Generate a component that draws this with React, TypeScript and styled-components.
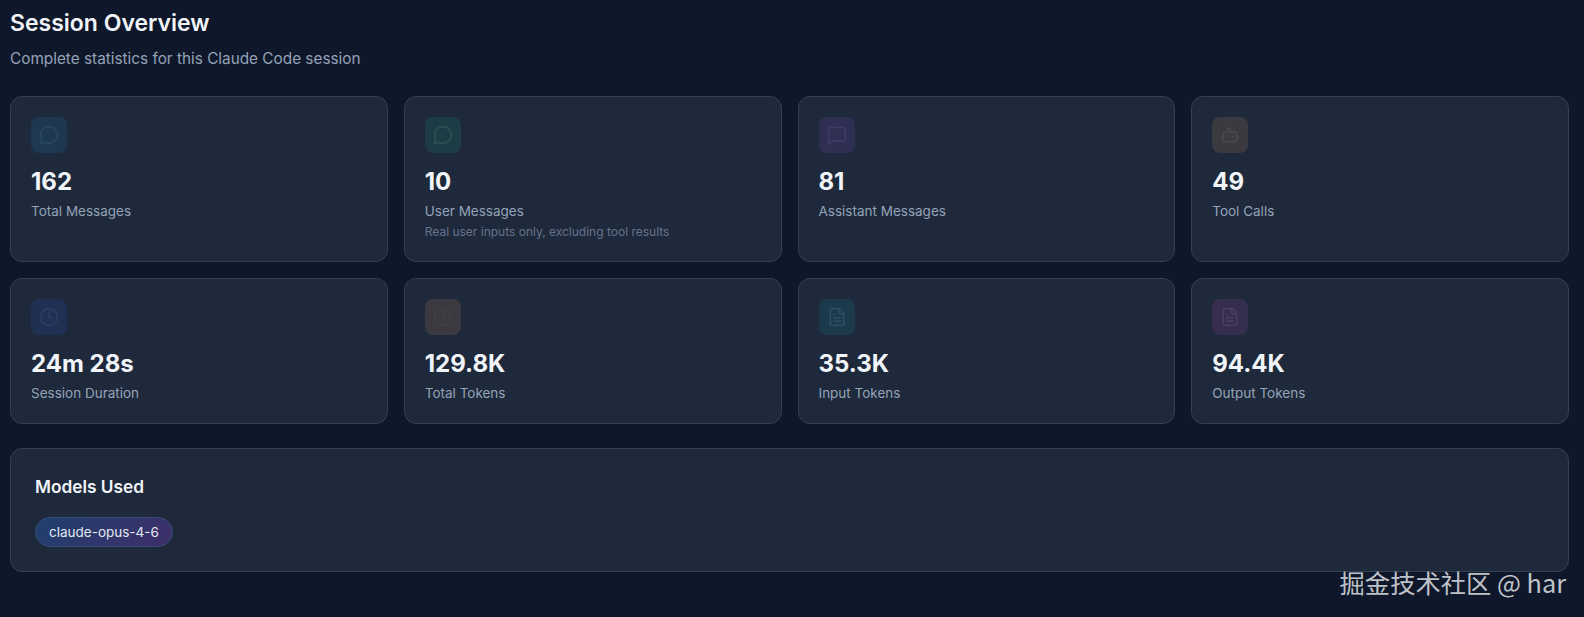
import React from 'react';
import styled, { createGlobalStyle } from 'styled-components';
import { MessageCircle, MessageSquare, Bot, Clock, PieChart, FileText } from 'lucide-react';

const Global = createGlobalStyle`
  html, body { margin: 0; padding: 0; background: #0f172a; }
  body { font-family: Inter, "Noto Sans", sans-serif; overflow: hidden; }
`;

const Page = styled.div`
  position: relative;
  height: 617px;
  box-sizing: border-box;
  padding: 10px 15px 0 10px;
  overflow: hidden;
`;

const Title = styled.h1`
  margin: 0;
  font-size: 23px;
  line-height: 26px;
  font-weight: 600;
  color: #f1f5f9;
`;

const Subtitle = styled.p`
  margin: 12px 0 0;
  font-size: 15.33px;
  line-height: 22px;
  color: #94a3b8;
`;

const Grid = styled.div`
  display: grid;
  grid-template-columns: repeat(4, 1fr);
  grid-template-rows: 166px 146px;
  gap: 16px;
  margin-top: 26px;
`;

const Card = styled.div`
  box-sizing: border-box;
  background: #1e293b;
  border: 1px solid #334155;
  border-radius: 12px;
  padding: 20px;
`;

const IconTile = styled.div<{ $bg: string; $fg: string }>`
  width: 36px;
  height: 36px;
  border-radius: 8px;
  display: flex;
  align-items: center;
  justify-content: center;
  background: ${p => p.$bg};
  color: ${p => p.$fg};
`;

const Value = styled.div`
  margin-top: 14px;
  font-size: 24px;
  line-height: 30px;
  font-weight: 700;
  color: #f1f5f9;
`;

const Label = styled.div`
  margin-top: 4px;
  font-size: 13.5px;
  line-height: 20px;
  color: #94a3b8;
`;

const Hint = styled.div`
  margin-top: 3px;
  font-size: 12px;
  line-height: 16px;
  color: #64748b;
`;

const Panel = styled.section`
  box-sizing: border-box;
  height: 124px;
  margin-top: 24px;
  padding: 25px 24px 24px;
  background: #1e293b;
  border: 1px solid #334155;
  border-radius: 12px;
`;

const PanelTitle = styled.h2`
  margin: 0;
  font-size: 17.3px;
  line-height: 26px;
  font-weight: 600;
  color: #f1f5f9;
`;

const Chips = styled.div`
  display: flex;
  gap: 8px;
  margin-top: 17px;
`;

const Chip = styled.span`
  box-sizing: border-box;
  height: 30px;
  padding: 0 13px;
  display: inline-flex;
  align-items: center;
  border-radius: 15px;
  border: 1px solid #334f7a;
  background: linear-gradient(135deg, #1f3f6e, #3f2f69);
  font-size: 13.5px;
  color: #e2e8f0;
`;

const Watermark = styled.div`
  position: absolute;
  right: 18px;
  bottom: 18px;
  font-family: "Noto Sans CJK SC", "Noto Sans", sans-serif;
  font-size: 25.3px;
  line-height: 34px;
  color: #bfc3c9;
  white-space: nowrap;
`;

const stats = [
  { value: '162', label: 'Total Messages', Icon: MessageCircle, bg: '#1e3853', fg: '#284860' },
  { value: '10', label: 'User Messages', hint: 'Real user inputs only, excluding tool results', Icon: MessageCircle, bg: '#1e3c46', fg: '#2a5252' },
  { value: '81', label: 'Assistant Messages', Icon: MessageSquare, bg: '#2e2f52', fg: '#3e3c64' },
  { value: '49', label: 'Tool Calls', Icon: Bot, bg: '#3a3a40', fg: '#4c4848' },
  { value: '24m 28s', label: 'Session Duration', Icon: Clock, bg: '#1f3052', fg: '#2c3d64' },
  { value: '129.8K', label: 'Total Tokens', Icon: PieChart, bg: '#3a3a40', fg: '#424240' },
  { value: '35.3K', label: 'Input Tokens', Icon: FileText, bg: '#1d3a4c', fg: '#2a4f60' },
  { value: '94.4K', label: 'Output Tokens', Icon: FileText, bg: '#362e4e', fg: '#4a3e60' },
];

export default function App() {
  return (
    <Page>
      <Global />
      <Title>Session Overview</Title>
      <Subtitle>Complete statistics for this Claude Code session</Subtitle>
      <Grid>
        {stats.map(({ value, label, hint, Icon, bg, fg }) => (
          <Card key={label}>
            <IconTile $bg={bg} $fg={fg}>
              <Icon size={20} strokeWidth={2} />
            </IconTile>
            <Value>{value}</Value>
            <Label>{label}</Label>
            {hint && <Hint>{hint}</Hint>}
          </Card>
        ))}
      </Grid>
      <Panel>
        <PanelTitle>Models Used</PanelTitle>
        <Chips>
          <Chip>claude-opus-4-6</Chip>
        </Chips>
      </Panel>
      <Watermark>掘金技术社区 @ har</Watermark>
    </Page>
  );
}
